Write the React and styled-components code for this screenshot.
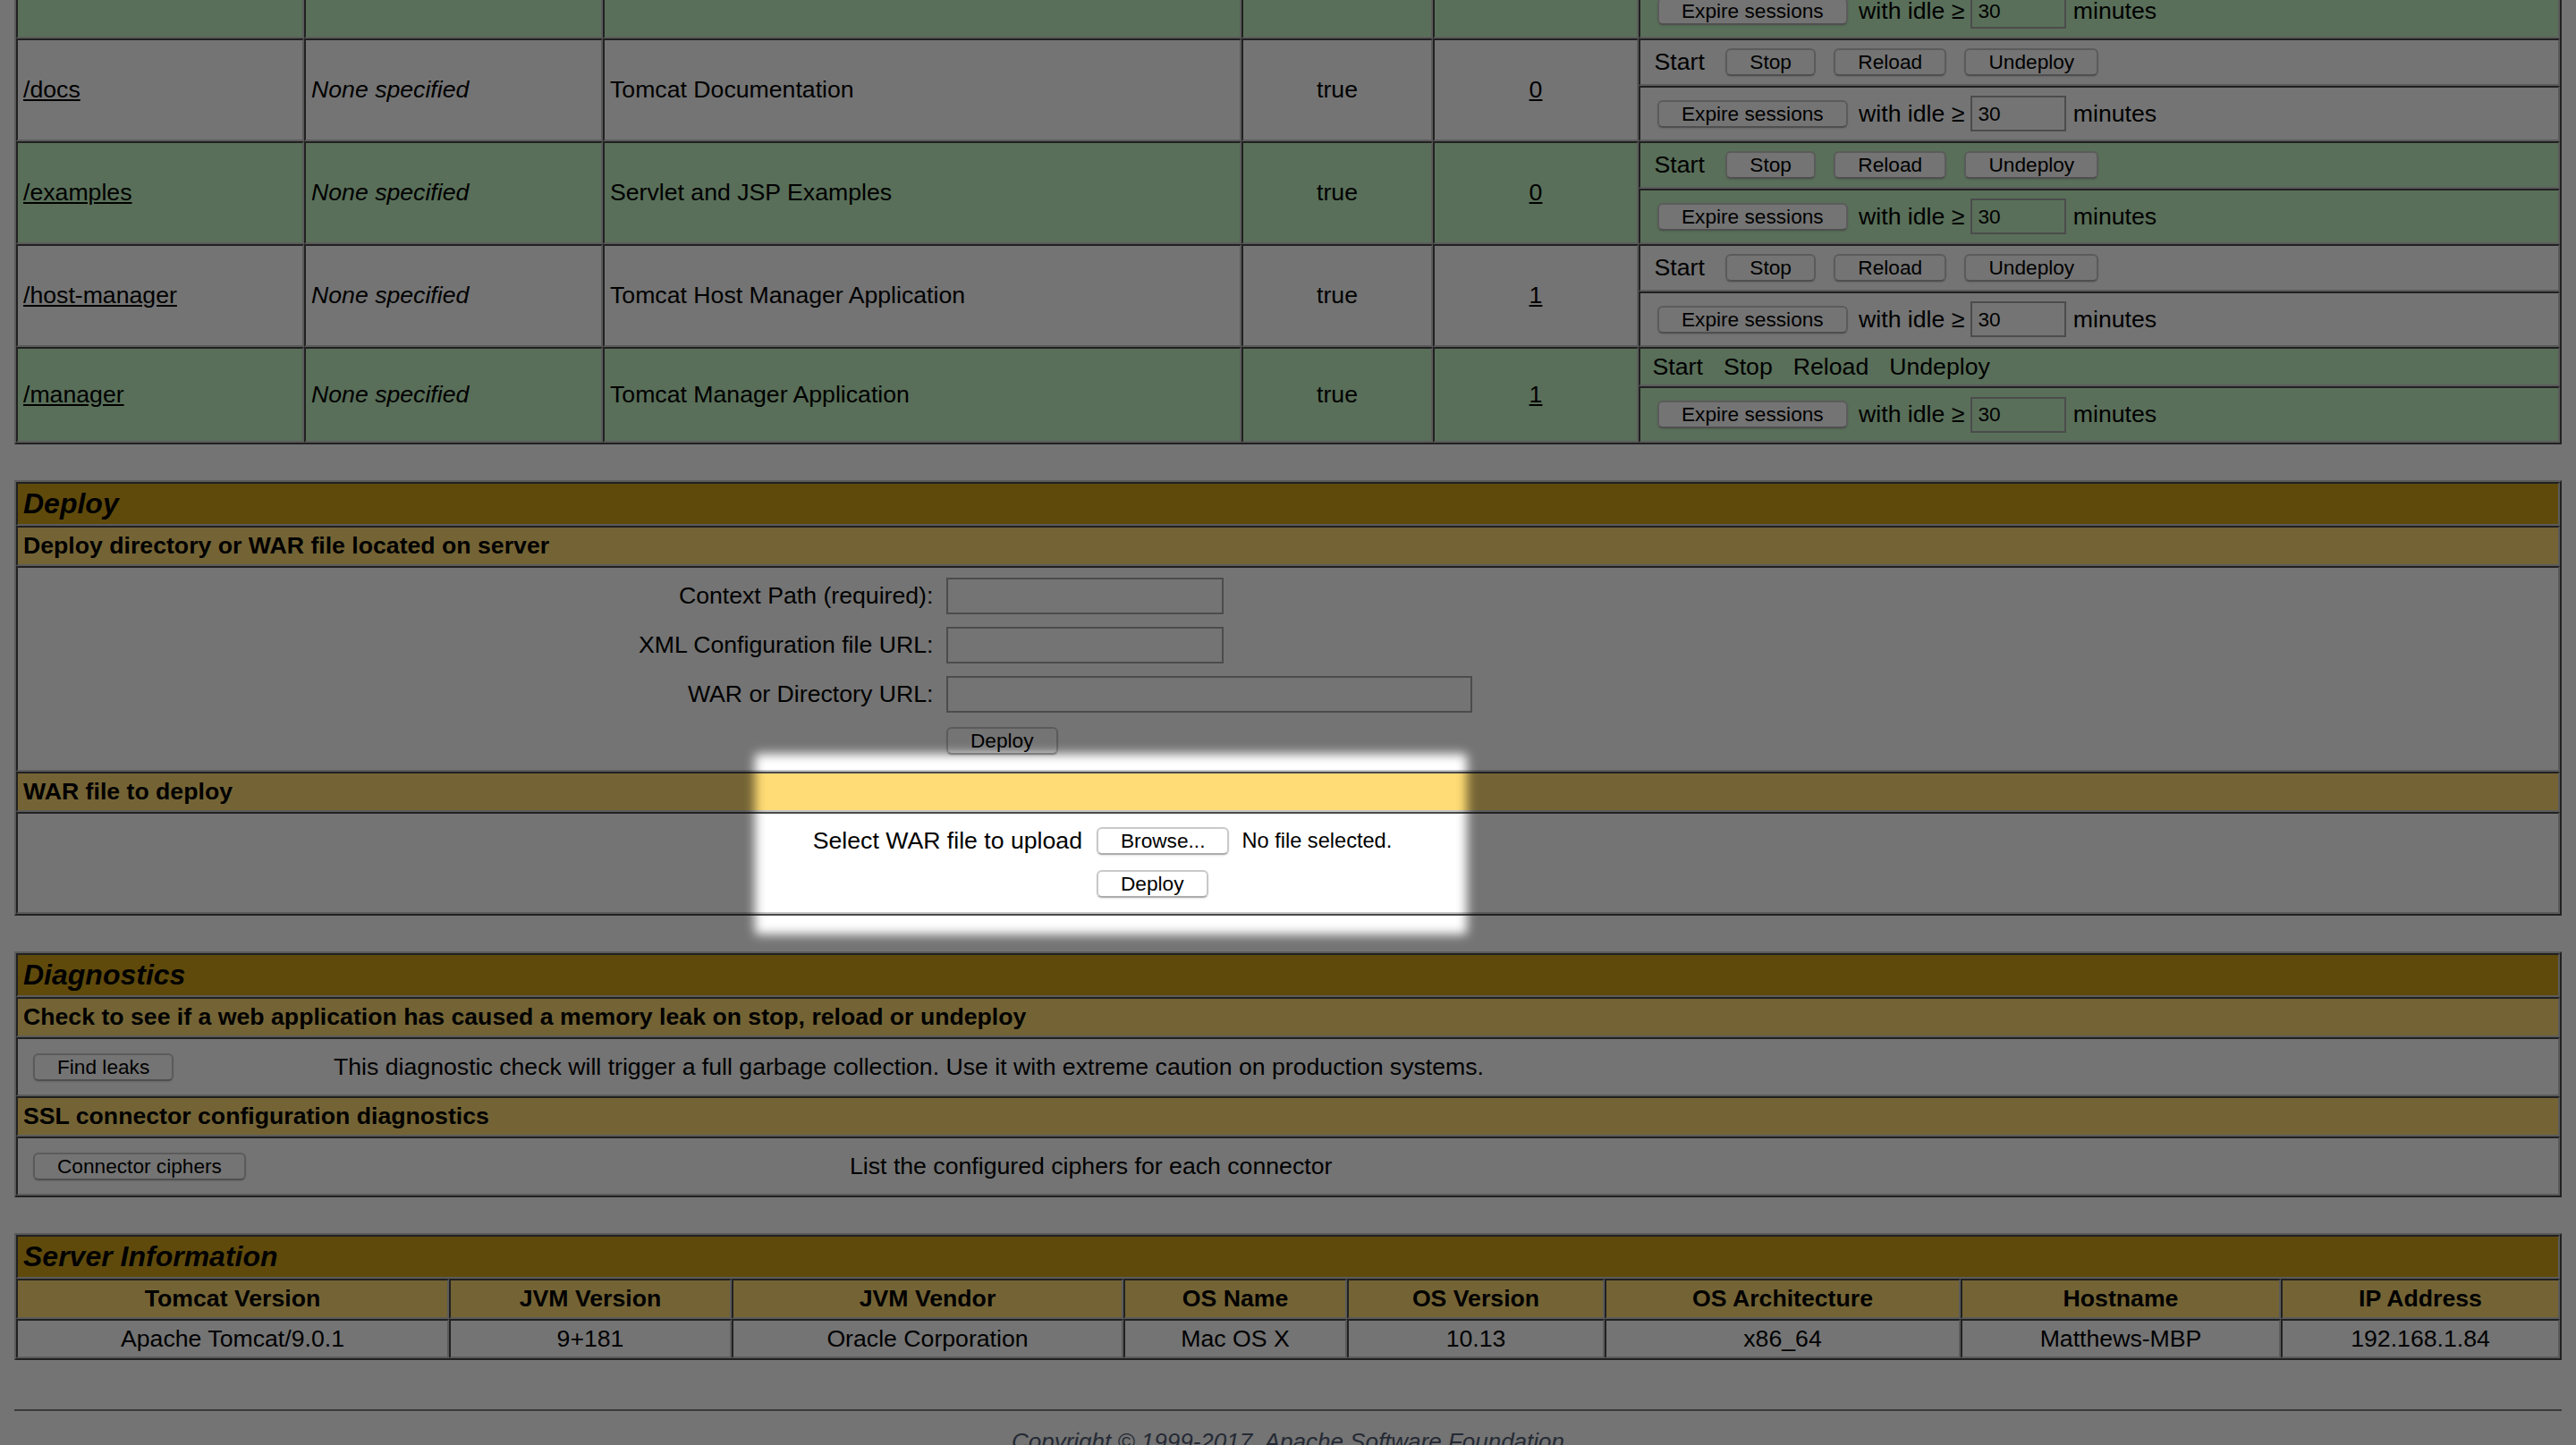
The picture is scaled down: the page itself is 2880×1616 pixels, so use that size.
import React from 'react';
import styled, { createGlobalStyle } from 'styled-components';

const DARK = '#4a4a4a';
const LIGHT = '#c8c8c8';
const TITLE = '#D2A41C';
const HEADER = '#FFDC75';
const GREEN = '#C3F3C3';

const GlobalStyle = createGlobalStyle`
  *, *::before, *::after { box-sizing: border-box; }
  html, body { margin: 0; padding: 0; background: #fff; }
  body {
    font-family: "Liberation Sans", Arial, Helvetica, sans-serif;
    color: #000;
  }
`;

const apps = [
  { path: '/', display: 'Welcome to Tomcat', sessions: '0', green: true, buttons: true },
  { path: '/docs', display: 'Tomcat Documentation', sessions: '0', green: false, buttons: true },
  { path: '/examples', display: 'Servlet and JSP Examples', sessions: '0', green: true, buttons: true },
  { path: '/host-manager', display: 'Tomcat Host Manager Application', sessions: '1', green: false, buttons: true },
  { path: '/manager', display: 'Tomcat Manager Application', sessions: '1', green: true, buttons: false },
];

const serverHead = ['Tomcat Version', 'JVM Version', 'JVM Vendor', 'OS Name', 'OS Version', 'OS Architecture', 'Hostname', 'IP Address'];
const serverData = ['Apache Tomcat/9.0.1', '9+181', 'Oracle Corporation', 'Mac OS X', '10.13', 'x86_64', 'Matthews-MBP', '192.168.1.84'];

function AppRow({ app }) {
  const bg = app.green ? GREEN : '#fff';
  return (
    <>
      <Cell $rowSpan={2} $bg={bg}><PathLink>{app.path}</PathLink></Cell>
      <Cell $rowSpan={2} $bg={bg}><em>None specified</em></Cell>
      <Cell $rowSpan={2} $bg={bg}>{app.display}</Cell>
      <Cell $rowSpan={2} $bg={bg} $align="center">true</Cell>
      <Cell $rowSpan={2} $bg={bg} $align="center"><PathLink>{app.sessions}</PathLink></Cell>
      {app.buttons ? (
        <CmdCell $bg={bg} $h={26.5} $pl={7.8} $gap={10.2}>
          <StartLabel>Start</StartLabel>
          <Btn>Stop</Btn>
          <Btn>Reload</Btn>
          <Btn>Undeploy</Btn>
        </CmdCell>
      ) : (
        <CmdCell $bg={bg} $h={22} $pl={6.8} $gap={11.5}>
          <span>Start</span>
          <span>Stop</span>
          <span>Reload</span>
          <span>Undeploy</span>
        </CmdCell>
      )}
      <CmdCell $bg={bg} $h={app.buttons ? 31 : 31.5} $pl={9.5}>
        <Btn>Expire sessions</Btn>
        <IdleText>with idle ≥</IdleText>
        <IdleInput defaultValue="30" />
        <Minutes>minutes</Minutes>
      </CmdCell>
    </>
  );
}

export default function App() {
  return (
    <Viewport>
      <GlobalStyle />
      <Page>
        <Table $cols="161px 167px 357px 107px 115px 515px">
          {apps.map((app) => (
            <AppRow key={app.path} app={app} />
          ))}
        </Table>

        <Table $cols="1fr" $mt={20}>
          <TitleCell>Deploy</TitleCell>
          <HeadCell>Deploy directory or WAR file located on server</HeadCell>
          <FormCell $h={115}>
            <FormGrid $label={511.7} $gap={7.3} $rows="27.5px 27.5px 27.5px 24.5px" $top={1.75}>
              <FieldLabel>Context Path (required):</FieldLabel>
              <TextInput $w={155} />
              <FieldLabel>XML Configuration file URL:</FieldLabel>
              <TextInput $w={155} />
              <FieldLabel>WAR or Directory URL:</FieldLabel>
              <TextInput $w={294} />
              <span />
              <Btn>Deploy</Btn>
            </FormGrid>
          </FormCell>
          <HeadCell>WAR file to deploy</HeadCell>
          <FormCell $h={57}>
            <FormGrid $label={595} $gap={8} $rows="27.5px 20.5px" $top={1.25}>
              <FieldLabel>Select WAR file to upload</FieldLabel>
              <FileField>
                <Btn>Browse...</Btn>
                <FileNote>No file selected.</FileNote>
              </FileField>
              <span />
              <Btn>Deploy</Btn>
            </FormGrid>
          </FormCell>
        </Table>

        <Table $cols="1fr" $mt={20}>
          <TitleCell>Diagnostics</TitleCell>
          <HeadCell>Check to see if a web application has caused a memory leak on stop, reload or undeploy</HeadCell>
          <DiagCell $h={33}>
            <DiagLine $lead={168}>
              <Btn>Find leaks</Btn>
              <span>This diagnostic check will trigger a full garbage collection. Use it with extreme caution on production systems.</span>
            </DiagLine>
          </DiagCell>
          <HeadCell>SSL connector configuration diagnostics</HeadCell>
          <DiagCell $h={33}>
            <DiagLine $lead={456.5}>
              <Btn>Connector ciphers</Btn>
              <span>List the configured ciphers for each connector</span>
            </DiagLine>
          </DiagCell>
        </Table>

        <Table $cols="242px 158px 219px 125px 144px 199px 179px 156px" $mt={20}>
          <TitleCell>Server Information</TitleCell>
          {serverHead.map((h) => (
            <HeadCell key={h} $align="center">{h}</HeadCell>
          ))}
          {serverData.map((d) => (
            <Cell key={d} $align="center" $h={22}>{d}</Cell>
          ))}
        </Table>

        <Rule />
        <Copyright>Copyright © 1999-2017, Apache Software Foundation</Copyright>
      </Page>
      <Spotlight />
    </Viewport>
  );
}

const Viewport = styled.div`
  zoom: 2;
  position: relative;
  width: 1440px;
  height: 808px;
  overflow: hidden;
  background: #fff;
`;

// scrolled part way down the manager page
const Page = styled.div`
  margin-top: -37px;
  padding: 0 8px;
  display: flex;
  flex-direction: column;
`;

const Table = styled.div`
  display: grid;
  grid-template-columns: ${(p) => p.$cols};
  border: 1px solid;
  border-color: ${LIGHT} ${DARK} ${DARK} ${LIGHT};
  margin-top: ${(p) => p.$mt || 0}px;
`;

const Cell = styled.div`
  grid-row: span ${(p) => p.$rowSpan || 1};
  border: 1px solid;
  border-color: ${DARK} ${LIGHT} ${LIGHT} ${DARK};
  background: ${(p) => p.$bg || 'transparent'};
  height: ${(p) => (p.$h ? `${p.$h}px` : 'auto')};
  display: flex;
  align-items: center;
  justify-content: ${(p) => (p.$align === 'center' ? 'center' : 'flex-start')};
  padding: 0 3px;
  font-size: 13.33px;
  white-space: nowrap;
`;

const TitleCell = styled(Cell)`
  grid-column: 1 / -1;
  height: 24.5px;
  background: ${TITLE};
  font-size: 16px;
  font-weight: bold;
  font-style: italic;
`;

const HeadCell = styled(Cell)`
  height: 22.5px;
  background: ${HEADER};
  font-weight: bold;
`;

const CmdCell = styled(Cell)`
  padding-left: ${(p) => p.$pl}px;
  gap: ${(p) => p.$gap || 0}px;
`;

const StartLabel = styled.span`
  margin-right: 1.5px;
`;

const PathLink = styled.a`
  color: #000;
  text-decoration: underline;
`;

const Btn = styled.button`
  font-family: "Liberation Sans", Arial, Helvetica, sans-serif;
  font-size: 11.33px;
  height: 15.5px;
  padding: 0 12.5px;
  background: #fff;
  color: #000;
  border: 1px solid #c9c9c9;
  border-bottom-color: #adadad;
  border-radius: 3px;
  box-shadow: 0 0.5px 1px rgba(0, 0, 0, 0.12);
  display: inline-flex;
  align-items: center;
  justify-content: center;
  line-height: 1;
  white-space: nowrap;
`;

const IdleText = styled.span`
  margin: 0 3.5px 0 6.2px;
`;

const IdleInput = styled.input`
  width: 53.4px;
  height: 20px;
  padding: 0 3px;
  border: 1px solid #a8a8a8;
  background: transparent;
  font-family: "Liberation Sans", Arial, Helvetica, sans-serif;
  font-size: 11.33px;
  color: #000;
`;

const Minutes = styled.span`
  margin-left: 3.8px;
`;

const FormCell = styled(Cell)`
  align-items: flex-start;
  padding: 0;
`;

const FormGrid = styled.div`
  display: grid;
  grid-template-columns: ${(p) => p.$label}px auto;
  grid-template-rows: ${(p) => p.$rows};
  column-gap: ${(p) => p.$gap}px;
  align-items: center;
  justify-items: start;
  padding-top: ${(p) => p.$top}px;
`;

const FieldLabel = styled.span`
  justify-self: end;
  font-size: 13.33px;
`;

const TextInput = styled.input`
  width: ${(p) => p.$w}px;
  height: 20.5px;
  border: 1px solid #a8a8a8;
  background: transparent;
  padding: 0 3px;
  font-size: 11px;
`;

const FileField = styled.div`
  display: flex;
  align-items: center;
  gap: 7px;
`;

const FileNote = styled.span`
  font-size: 11.8px;
`;

const DiagCell = styled(Cell)`
  padding-left: 8.5px;
`;

const DiagLine = styled.div`
  display: grid;
  grid-template-columns: ${(p) => p.$lead}px auto;
  align-items: center;
  justify-items: start;
  width: 100%;
`;

const Rule = styled.hr`
  margin: 27.5px 0 0;
  height: 0;
  border: 0;
  border-top: 1px solid #808080;
`;

const Copyright = styled.div`
  margin-top: 9.5px;
  text-align: center;
  font-size: 13px;
  font-style: italic;
  color: #525d76;
`;

// dimmed page with a soft-edged hole over the WAR upload form
const Spotlight = styled.div`
  position: absolute;
  left: 422px;
  top: 421.5px;
  width: 398px;
  height: 101px;
  border-radius: 2px;
  box-shadow: 0 0 0 3000px rgba(0, 0, 0, 0.545);
  filter: blur(3px);
  pointer-events: none;
`;
